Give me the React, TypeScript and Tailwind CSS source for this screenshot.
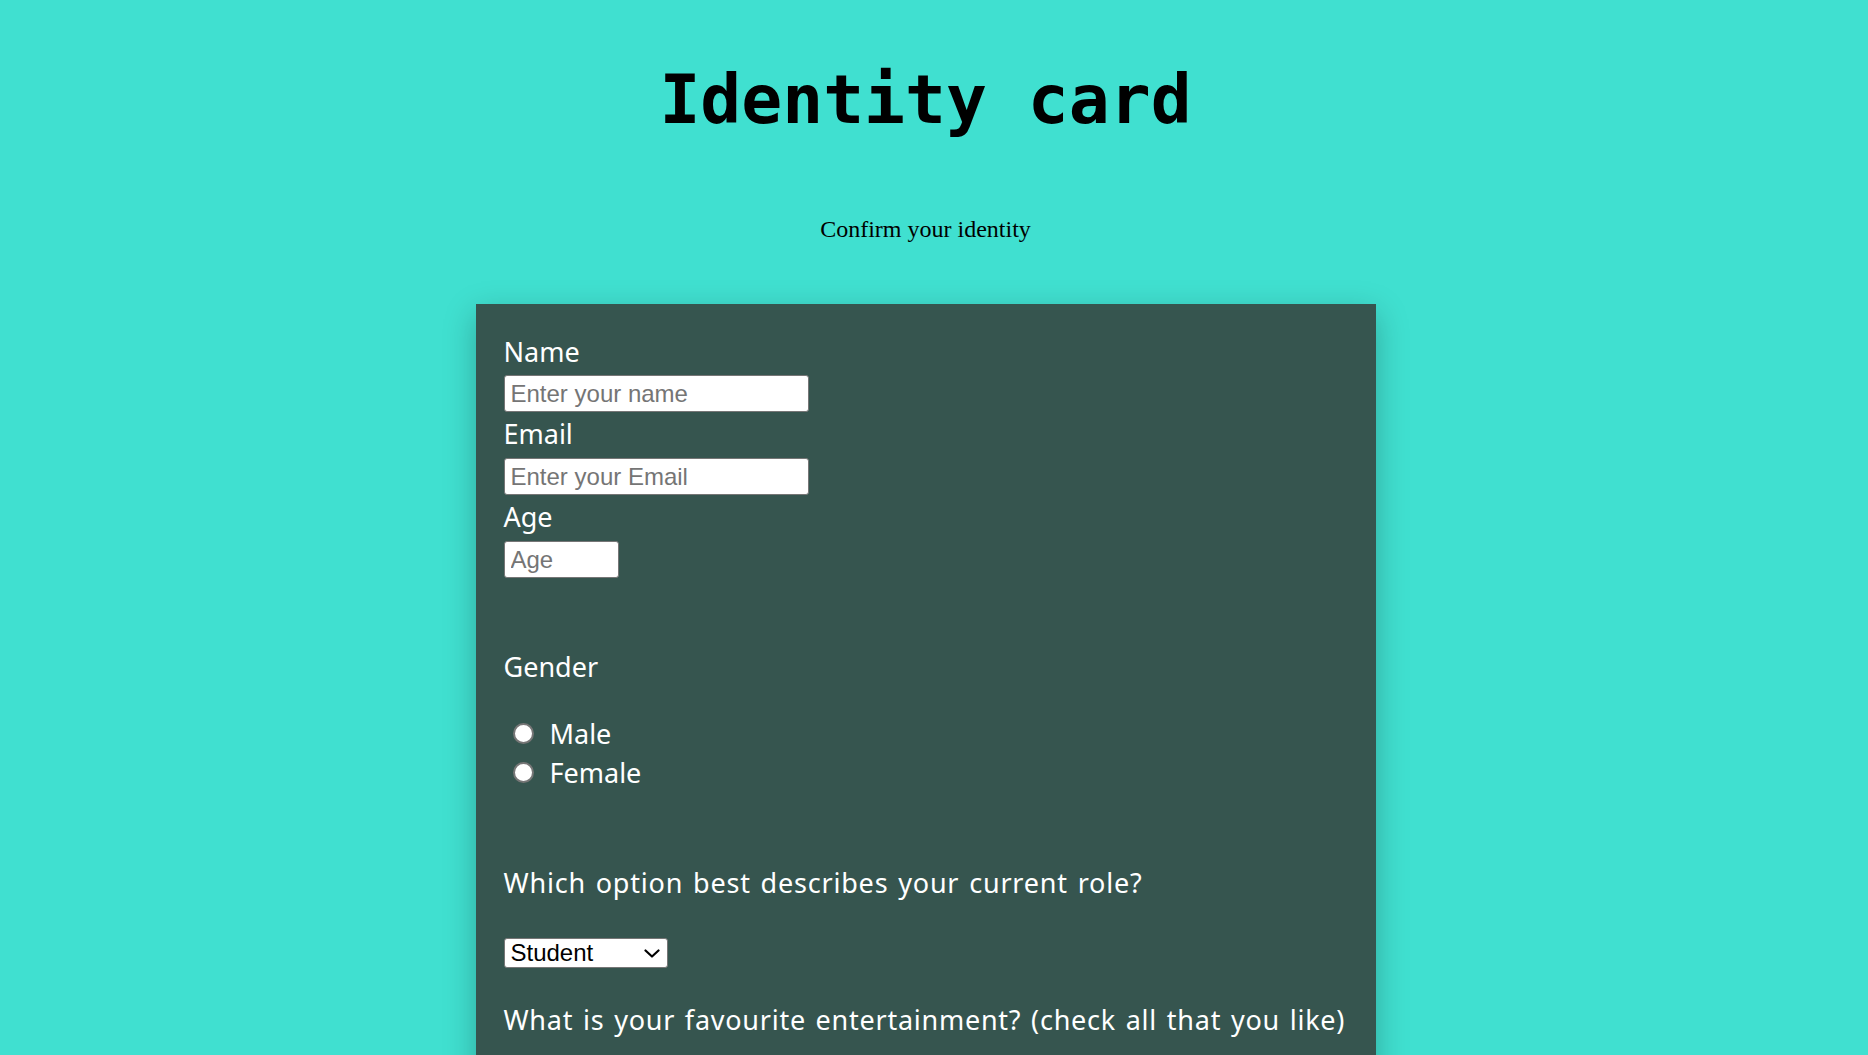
import React from 'react';

export default function App() {
  return (
    <div className="h-screen overflow-hidden bg-[#40e0d0]">
      <div className="w-[calc(100%-17px)] pt-[61px] pb-10">
        <h1 className="text-center font-['DejaVu_Sans_Mono',monospace] text-[68px] leading-[78px] font-bold text-black">
          Identity card
        </h1>
        <p className="mt-[77px] text-center font-['Liberation_Serif',serif] text-[24px] leading-[27px] text-black">
          Confirm your identity
        </p>

        <form className="mx-auto mt-[61px] w-[900px] bg-[#36554f] px-[28px] pt-[29px] pb-12 font-['Comic_Sans_MS','Noto_Sans',sans-serif] text-[27px] leading-[38px] text-white shadow-[0_10px_30px_rgba(0,0,0,0.25)]">
          {/* Text fields */}
          <label htmlFor="name" className="block h-[38px]">Name</label>
          <input
            id="name"
            type="text"
            placeholder="Enter your name"
            className="mt-[4px] block h-[37px] w-[305px] rounded-[3px] border border-[#767676] bg-white px-[6px] font-['Liberation_Sans',Arial,sans-serif] text-[24px] text-black placeholder:text-[#757575]"
          />
          <label htmlFor="email" className="mt-[3px] block h-[38px]">Email</label>
          <input
            id="email"
            type="email"
            placeholder="Enter your Email"
            className="mt-[5px] block h-[37px] w-[305px] rounded-[3px] border border-[#767676] bg-white px-[6px] font-['Liberation_Sans',Arial,sans-serif] text-[24px] text-black placeholder:text-[#757575]"
          />
          <label htmlFor="age" className="mt-[3px] block h-[38px]">Age</label>
          <input
            id="age"
            type="number"
            placeholder="Age"
            className="mt-[5px] block h-[37px] w-[115px] rounded-[3px] border border-[#767676] bg-white px-[6px] font-['Liberation_Sans',Arial,sans-serif] text-[24px] text-black placeholder:text-[#757575]"
          />

          {/* Gender */}
          <p className="mt-[70px] h-[38px]">Gender</p>
          <div className="mt-[28px]">
            <label className="flex h-[39px] items-center">
              <input type="radio" name="gender" className="ml-[9px] mr-[16px] h-[21px] w-[21px] appearance-none rounded-full border-2 border-[#767676] bg-white" />
              Male
            </label>
            <label className="flex h-[39px] items-center">
              <input type="radio" name="gender" className="ml-[9px] mr-[16px] h-[21px] w-[21px] appearance-none rounded-full border-2 border-[#767676] bg-white" />
              Female
            </label>
          </div>

          {/* Role */}
          <p className="mt-[72px] h-[38px] whitespace-nowrap tracking-[0.8px] [word-spacing:2px]">Which option best describes your current role?</p>
          <div className="relative mt-[36px] inline-block">
            <select className="block h-[30px] w-[164px] appearance-none rounded-[3px] border border-[#767676] bg-white pl-[6px] font-['Liberation_Sans',Arial,sans-serif] text-[24px] leading-[28px] text-black">
              <option>Student</option>
              <option>Full Time Job</option>
              <option>Full Time Learner</option>
              <option>Prefer not to say</option>
              <option>Other</option>
            </select>
            <svg className="pointer-events-none absolute right-[8px] top-[11px]" width="16" height="9" viewBox="0 0 16 9" fill="none">
              <polyline points="1.5,1.5 8,7.5 14.5,1.5" stroke="#000" strokeWidth="2.2" strokeLinecap="round" strokeLinejoin="round" />
            </svg>
          </div>

          {/* Entertainment */}
          <p className="mt-[31px] h-[38px] whitespace-nowrap tracking-[0.75px] [word-spacing:2px]">What is your favourite entertainment? (check all that you like)</p>
        </form>
      </div>
    </div>
  );
}
